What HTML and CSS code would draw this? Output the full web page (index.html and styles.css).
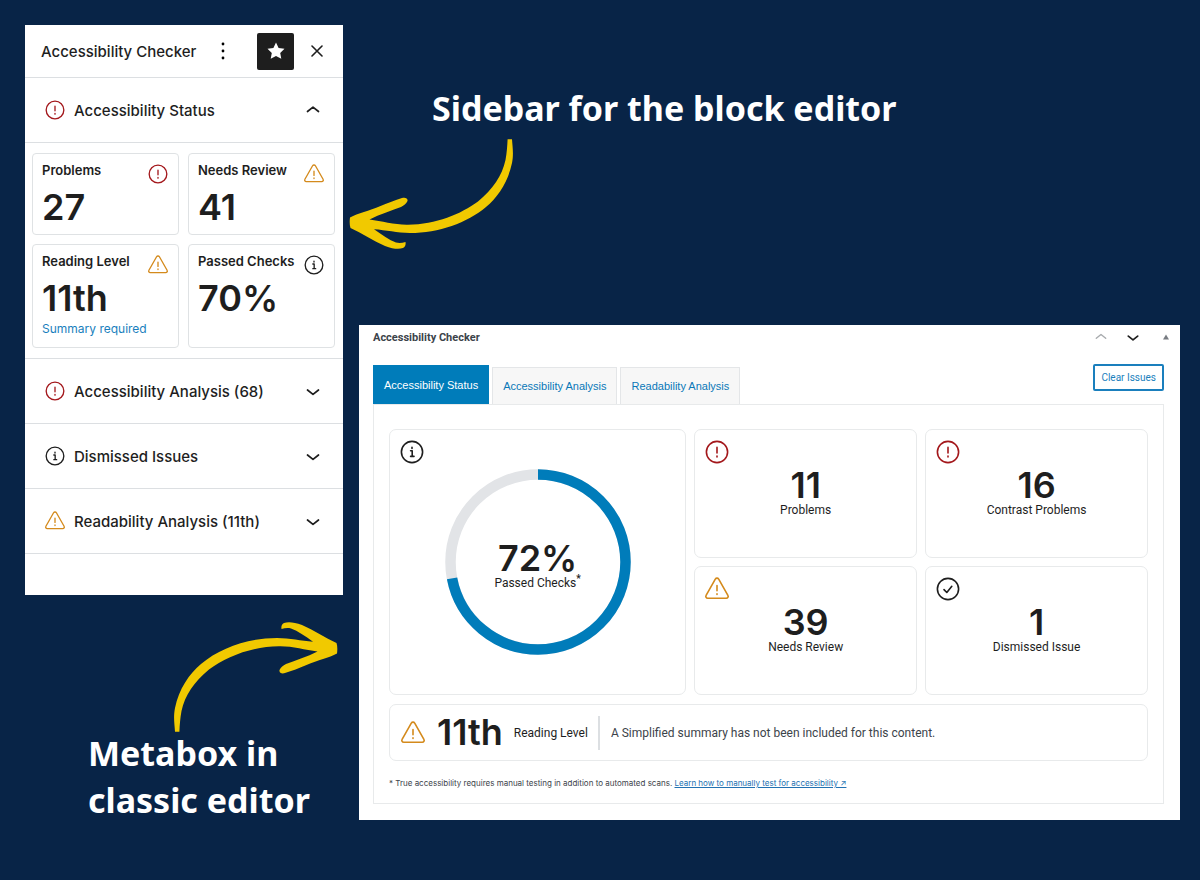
FILE: index.html
```html
<!DOCTYPE html>
<html lang="en">
<head>
<meta charset="utf-8">
<meta name="viewport" content="width=device-width, initial-scale=1">
<title>Accessibility Checker</title>
<link rel="stylesheet" href="styles.css">
</head>
<body>
<svg class="sprite" aria-hidden="true">
  <symbol id="i-alert" viewBox="0 0 24 24"><circle cx="12" cy="12" r="10.6"/><path d="M12 7.4v5.6M12 16v1"/></symbol>
  <symbol id="i-warn" viewBox="0 0 24 24"><path d="M10.300 2.100a2 2 0 0 1 3.400 0l9.200 16.200a1.900 1.900 0 0 1-1.700 2.900H2.800a1.900 1.900 0 0 1-1.700-2.900z"/><path d="M12 8.500v5.200M12 16.700v.8"/></symbol>
  <symbol id="i-info" viewBox="0 0 24 24"><circle cx="12" cy="12" r="10.6"/><path d="M10.6 10.8h1.6v5.4M10.6 16.4h3.4M12 7.3v1.2"/></symbol>
  <symbol id="i-check" viewBox="0 0 24 24"><circle cx="12" cy="12" r="10.6"/><path d="M8 12.6l2.8 2.9 5-6.2"/></symbol>
  <symbol id="i-down" viewBox="0 0 14 14"><path d="M1.500 6L7 10.400l5.500-4.400"/></symbol>
  <symbol id="i-up" viewBox="0 0 14 14"><path d="M1.500 8.500L7 4.100l5.500 4.400"/></symbol>
  <symbol id="i-arrow" viewBox="0 0 164 112"><path d="M158.600 1.300H163C163.500 9 164.800 16 163 25C159 44 149 59 137 69C118 85 90 95 61 95C48 95 37 92 25 91.300C33 97 40 102 47 104.500C50 105.300 53 105 56.500 104C57 107 56 109 54 110C50 111.500 44 111 36 108C24 103 13 95 1.500 90C.5 87 .5 83 1 79.500C9 75 20 73 31.500 68C39 65 46 62 53 60C56 59 59 60 58.500 63C57 66 55 67.500 52 69C42 73 31 76 20.500 81.500C33 83 46 87 59 86.700C87 86.500 112 76 129 63.500C144 51 153 38 156.500 22C157.800 15 158.300 8 158.600 1.300Z"/></symbol>
</svg>

<main class="board">
  <div class="left">
    <aside class="sidebar" aria-label="Accessibility Checker sidebar">
      <header class="side-head">
        <h2 class="side-title">Accessibility Checker</h2>
        <button class="icon-btn" type="button" aria-label="Options"><svg class="dots" viewBox="0 0 4 18"><circle cx="2" cy="2" r="1.400"/><circle cx="2" cy="9" r="1.400"/><circle cx="2" cy="16" r="1.400"/></svg></button>
        <button class="star-btn" type="button" aria-label="Unpin from toolbar"><svg class="star" viewBox="0 0 18 18"><path d="M9 .6l2.600 5.400 5.900.8-4.300 4.100 1.100 5.900L9 14l-5.300 2.800 1.100-5.900L.5 6.800 6.400 6z"/></svg></button>
        <button class="icon-btn" type="button" aria-label="Close"><svg class="line close" viewBox="0 0 12 12"><path d="M1 1l10 10M11 1L1 11"/></svg></button>
      </header>
      <button class="row" type="button" aria-expanded="true"><svg class="line icon red"><use href="#i-alert"/></svg><span class="row-text">Accessibility Status</span><svg class="line chev"><use href="#i-up"/></svg></button>
      <div class="tiles">
        <section class="tile"><div class="tile-head"><h3 class="tile-label">Problems</h3><svg class="line icon red"><use href="#i-alert"/></svg></div><p class="tile-value">27</p></section>
        <section class="tile"><div class="tile-head"><h3 class="tile-label">Needs Review</h3><svg class="line icon amber"><use href="#i-warn"/></svg></div><p class="tile-value">41</p></section>
        <section class="tile"><div class="tile-head"><h3 class="tile-label">Reading Level</h3><svg class="line icon amber"><use href="#i-warn"/></svg></div><p class="tile-value">11th</p><a class="tile-link" href="#summary">Summary required</a></section>
        <section class="tile"><div class="tile-head"><h3 class="tile-label">Passed Checks</h3><svg class="line icon"><use href="#i-info"/></svg></div><p class="tile-value">70%</p></section>
      </div>
      <button class="row" type="button" aria-expanded="false"><svg class="line icon red"><use href="#i-alert"/></svg><span class="row-text">Accessibility Analysis (68)</span><svg class="line chev"><use href="#i-down"/></svg></button>
      <button class="row" type="button" aria-expanded="false"><svg class="line icon"><use href="#i-info"/></svg><span class="row-text">Dismissed Issues</span><svg class="line chev"><use href="#i-down"/></svg></button>
      <button class="row" type="button" aria-expanded="false"><svg class="line icon amber"><use href="#i-warn"/></svg><span class="row-text">Readability Analysis (11th)</span><svg class="line chev"><use href="#i-down"/></svg></button>
    </aside>
    <svg class="arrow arrow-right" aria-hidden="true"><use href="#i-arrow"/></svg>
    <h1 class="note note-metabox">Metabox in<br>classic editor</h1>
  </div>

  <div class="right">
    <h1 class="note note-sidebar">Sidebar for the block editor</h1>
    <svg class="arrow" aria-hidden="true"><use href="#i-arrow"/></svg>
    <section class="metabox" aria-label="Accessibility Checker metabox">
      <header class="meta-head">
        <h2 class="meta-title">Accessibility Checker</h2>
        <button class="icon-btn" type="button" aria-label="Move up"><svg class="line meta-chev muted"><use href="#i-up"/></svg></button>
        <button class="icon-btn" type="button" aria-label="Move down"><svg class="line meta-chev"><use href="#i-down"/></svg></button>
        <button class="icon-btn" type="button" aria-label="Toggle panel"><svg class="toggle" viewBox="0 0 6 6"><path d="M3 .5L6 5.500H0z"/></svg></button>
      </header>
      <div class="tab-bar">
        <div class="tabs" role="tablist">
          <button class="tab tab-active" type="button" role="tab" aria-selected="true">Accessibility Status</button>
          <button class="tab" type="button" role="tab" aria-selected="false">Accessibility Analysis</button>
          <button class="tab" type="button" role="tab" aria-selected="false">Readability Analysis</button>
        </div>
        <button class="clear" type="button">Clear Issues</button>
      </div>
      <div class="content">
        <div class="stats">
          <section class="card card-chart">
            <svg class="line card-icon"><use href="#i-info"/></svg>
            <svg class="ring" viewBox="0 0 186 186" aria-hidden="true"><circle class="ring-rest" cx="93" cy="93" r="87.500"/><circle class="ring-done" cx="93" cy="93" r="87.500" pathLength="100"/></svg>
            <p class="value">72%</p><p class="caption">Passed Checks<sup class="star-mark">*</sup></p>
          </section>
          <section class="card"><svg class="line card-icon red"><use href="#i-alert"/></svg><p class="value">11</p><p class="caption">Problems</p></section>
          <section class="card"><svg class="line card-icon red"><use href="#i-alert"/></svg><p class="value">16</p><p class="caption">Contrast Problems</p></section>
          <section class="card"><svg class="line card-icon amber"><use href="#i-warn"/></svg><p class="value">39</p><p class="caption">Needs Review</p></section>
          <section class="card"><svg class="line card-icon"><use href="#i-check"/></svg><p class="value">1</p><p class="caption">Dismissed Issue</p></section>
        </div>
        <section class="reading">
          <svg class="line reading-icon amber"><use href="#i-warn"/></svg>
          <p class="value">11th</p>
          <p class="caption reading-label">Reading Level</p>
          <p class="caption summary">A Simplified summary has not been included for this content.</p>
        </section>
        <p class="footnote">* True accessibility requires manual testing in addition to automated scans. <a class="foot-link" href="#manual">Learn how to manually test for accessibility ↗</a></p>
      </div>
    </section>
  </div>
</main>
</body>
</html>
```
FILE: styles.css
```css
* { box-sizing: border-box; }
body {
  margin: 0;
  min-height: 100vh;
  background: #082447;
  color: #1e1e1e;
  font-family: Inter, "Liberation Sans", sans-serif;
}
h1, h2, h3, p { margin: 0; }
button { font-family: inherit; color: inherit; background: none; border: 0; padding: 0; cursor: pointer; }
svg { display: block; flex: none; }
.sprite { position: absolute; width: 0; height: 0; }
.line { fill: none; stroke: currentColor; stroke-width: 1.6; stroke-linecap: round; stroke-linejoin: round; }
.red { color: #a3171b; }
.amber { color: #d48a1c; }

.board {
  display: grid;
  grid-template-columns: 318px minmax(0, 1fr);
  column-gap: 6px;
  padding: 25px 20px 20px 25px;
}

/* Annotations */
.note {
  color: #fff;
  font: 700 34px/47px "Noto Sans", "Open Sans", sans-serif;
}
.note-sidebar { margin: 60px 0 6px 83px; }
.note-metabox { margin-left: 63px; }
.arrow { width: 164px; height: 112px; fill: #f1c900; }
.arrow-right { margin: 26px 0 -3px 149px; transform: rotate(180deg); }

/* Block editor sidebar */
.sidebar { background: #fff; padding-bottom: 41px; }
.side-head {
  display: flex;
  align-items: center;
  height: 53px;
  padding: 0 16px;
  border-bottom: 1px solid #dcdfe2;
}
.side-title { flex: 1; font-size: 15px; font-weight: 500; }
.icon-btn { display: flex; }
.dots { width: 4px; height: 18px; }
.star-btn {
  display: grid;
  place-items: center;
  width: 37px;
  height: 37px;
  margin: 0 17px 0 32px;
  background: #1e1e1e;
  border-radius: 2px;
}
.star { width: 18px; height: 18px; fill: #fff; }
.close { width: 12px; height: 12px; margin-right: 4px; }
.row {
  display: flex;
  align-items: center;
  gap: 9px;
  width: 100%;
  height: 65px;
  padding: 0 23px 0 20px;
  border-bottom: 1px solid #dcdfe2;
  text-align: left;
}
.row-text { flex: 1; font-size: 15px; font-weight: 500; }
.icon { width: 20px; height: 20px; }
.chev { width: 14px; height: 14px; stroke-width: 1.7; }
.tiles {
  display: grid;
  grid-template-columns: 1fr 1fr;
  gap: 9px;
  padding: 10px 8px 10px 7px;
  border-bottom: 1px solid #dcdfe2;
}
.tile { padding: 8px 10px 8px 9px; border: 1px solid #dfe2e4; border-radius: 4px; }
.tile-head { display: flex; justify-content: space-between; height: 26px; }
.tile-head .icon { margin-top: 2px; }
.tile-label { font-size: 13px; font-weight: 600; line-height: 16px; }
.tile-value { font-size: 36px; font-weight: 600; line-height: 38px; }
.tile-link { display: block; margin: 4px 0 2px; font-size: 12px; line-height: 16px; color: #1a7fbd; text-decoration: none; }

/* Classic editor metabox */
.metabox { margin: 75px 0 0 10px; padding: 0 16px 16px 14px; background: #fff; }
.meta-head { display: flex; align-items: center; height: 24px; margin-right: -5px; }
.meta-title { flex: 1; font: 700 11px Roboto, sans-serif; color: #3c434a; }
.meta-chev { width: 12px; height: 12px; margin-right: 20px; stroke-width: 2; }
.meta-head .icon-btn:nth-of-type(2) { margin-right: 4px; }
.muted { color: #a7aaad; stroke-width: 1.6; }
.toggle { width: 6px; height: 6px; fill: #787c82; }
.tab-bar { display: flex; justify-content: space-between; align-items: flex-start; padding-top: 15px; }
.tabs { display: flex; align-items: flex-end; gap: 3px; margin-top: 1px; }
.tab {
  height: 37px;
  padding: 0 10px;
  border: 1px solid #e4e6e8;
  border-bottom: 0;
  background: #f7f7f7;
  color: #0a78b8;
  font: 11px "Liberation Sans", sans-serif;
}
.tab-active { height: 39px; border-color: #007cba; background: #007cba; color: #fff; }
.clear {
  height: 27px;
  padding: 0 6px;
  border: 2px solid #1a7fbd;
  border-radius: 2px;
  color: #1a7fbd;
  font: 10px Roboto, sans-serif;
}
.content { border: 1px solid #e8eaeb; padding: 24px 15px 14px; }
.stats {
  display: grid;
  grid-template-columns: 4fr 3fr 3fr;
  grid-template-rows: 129px 129px;
  gap: 8px;
}
.card {
  position: relative;
  display: flex;
  flex-direction: column;
  align-items: center;
  justify-content: center;
  border: 1px solid #e8eaeb;
  border-radius: 7px;
}
.card-chart { grid-row: span 2; padding-top: 8px; }
.card-icon { position: absolute; top: 10px; left: 10px; width: 24px; height: 24px; }
.ring { position: absolute; inset: 0; margin: auto; width: 186px; height: 186px; fill: none; stroke-width: 10.5; transform: rotate(-90deg); }
.ring-rest { stroke: #e2e4e7; }
.ring-done { stroke: #007cba; stroke-dasharray: 72 28; }
.value { font-size: 36px; font-weight: 600; line-height: 33px; }
.caption { font: 12px/16px Roboto, sans-serif; }
.star-mark { font-size: 10px; font-weight: 700; line-height: 0; vertical-align: 5px; }
.reading {
  display: flex;
  align-items: center;
  height: 57px;
  margin-top: 9px;
  padding-left: 11px;
  border: 1px solid #e8eaeb;
  border-radius: 7px;
}
.reading-icon { width: 24px; height: 24px; margin-right: 12px; }
.reading-label { margin: 0 10px 0 11px; }
.summary { border-left: 2px solid #dcdfe2; padding: 9px 0 9px 11px; color: #3c434a; }
.footnote { margin-top: 16px; font-size: 8px; line-height: 12px; color: #3c434a; }
.foot-link { color: #2271b1; }
```
